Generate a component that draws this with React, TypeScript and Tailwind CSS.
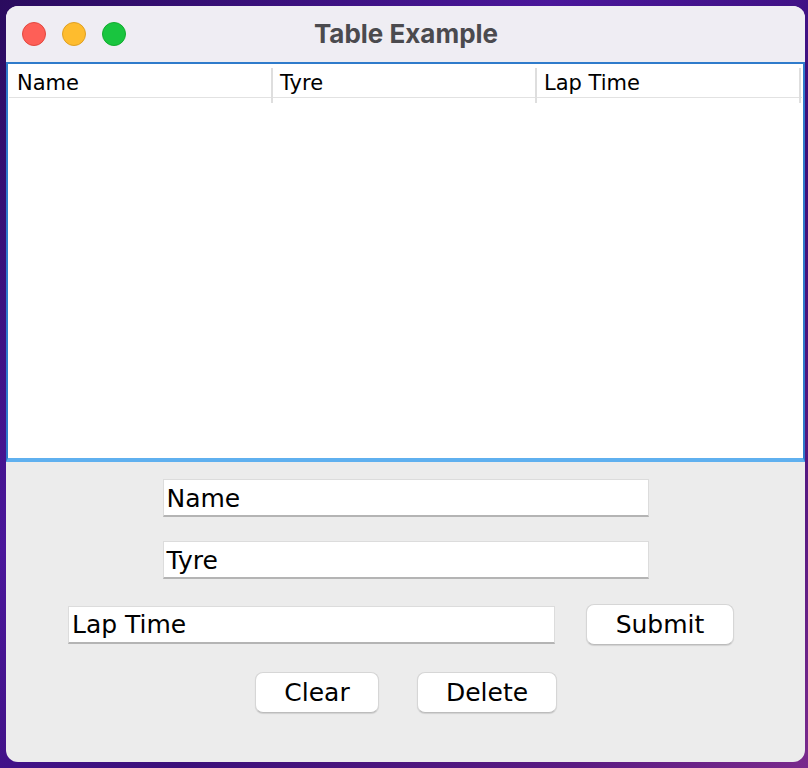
const font = { fontFamily: '"DejaVu Sans", "Liberation Sans", sans-serif' };

function Field({ label, width }: { label: string; width: string }) {
  return (
    <div
      className={`${width} h-[38px] bg-white border border-[#dcdcdc] border-b-2 border-b-[#b4b4b4] flex items-center pl-[3px] pt-[2px] text-[25px] text-black`}
    >
      {label}
    </div>
  );
}

function Button({ label, width }: { label: string; width: string }) {
  return (
    <button
      className={`${width} h-[41px] bg-white rounded-[8px] border border-[#d6d6d6] border-b-[#bcbcbc] shadow-[0_1px_1px_rgba(0,0,0,0.12)] text-[25px] text-black flex items-center justify-center`}
    >
      {label}
    </button>
  );
}

export default function App() {
  return (
    <div
      className="w-[808px] h-[768px] pl-[6px] pt-[6px] bg-[linear-gradient(135deg,#2a0b5e_0%,#4a169a_35%,#3b0f7a_60%,#5a1a82_85%,#7a2a8c_100%)]"
      style={font}
    >
      <div className="w-[799px] h-[756px] rounded-[12px] overflow-hidden flex flex-col bg-[#ececec]">
        {/* title bar */}
        <div className="h-[56px] bg-[#efedf3] flex items-center relative shrink-0">
          <div className="flex gap-[16px] pl-[16px]">
            <span className="w-[24px] h-[24px] rounded-full bg-[#fe5f57] border border-[#e2483f]" />
            <span className="w-[24px] h-[24px] rounded-full bg-[#febc2e] border border-[#dfa023]" />
            <span className="w-[24px] h-[24px] rounded-full bg-[#19c53f] border border-[#12ac2e]" />
          </div>
          <div
            className="absolute inset-0 flex items-center justify-center pl-[1px] pb-[2px] text-[26px] font-bold text-[#4b4a4e]"
            style={{ fontFamily: '"Inter", "Liberation Sans", sans-serif' }}
          >
            Table Example
          </div>
        </div>

        {/* table */}
        <div className="h-[400px] shrink-0 bg-white border-2 border-[#2f7bcb] border-b-[4px] border-b-[#5fb0ef] flex flex-col">
          <div className="h-[34px] mx-[1px] border-b border-[#e2e2e2] grid grid-cols-[264px_264px_264px] text-[21px] text-black">
            <div className="flex items-center pl-[8px] pb-[3px] border-r-2 border-r-[#dedede] mt-[4px] mb-[7px]">Name</div>
            <div className="flex items-center pl-[7px] pb-[3px] border-r-2 border-r-[#dedede] mt-[4px] mb-[7px]">Tyre</div>
            <div className="flex items-center pl-[7px] pb-[3px] border-r-2 border-r-[#dedede] mt-[4px] mb-[7px]">Lap Time</div>
          </div>
        </div>

        {/* form */}
        <div className="flex-1 flex flex-col items-center pt-[17px]">
          <Field label="Name" width="w-[486px]" />
          <div className="h-[24px]" />
          <Field label="Tyre" width="w-[486px]" />
          <div className="h-[25px]" />
          <div className="flex items-center gap-[31px] pr-[9px]">
            <Field label="Lap Time" width="w-[487px]" />
            <Button label="Submit" width="w-[148px]" />
          </div>
          <div className="h-[27px]" />
          <div className="flex gap-[38px] pl-[1px]">
            <Button label="Clear" width="w-[124px]" />
            <Button label="Delete" width="w-[140px]" />
          </div>
        </div>
      </div>
    </div>
  );
}
